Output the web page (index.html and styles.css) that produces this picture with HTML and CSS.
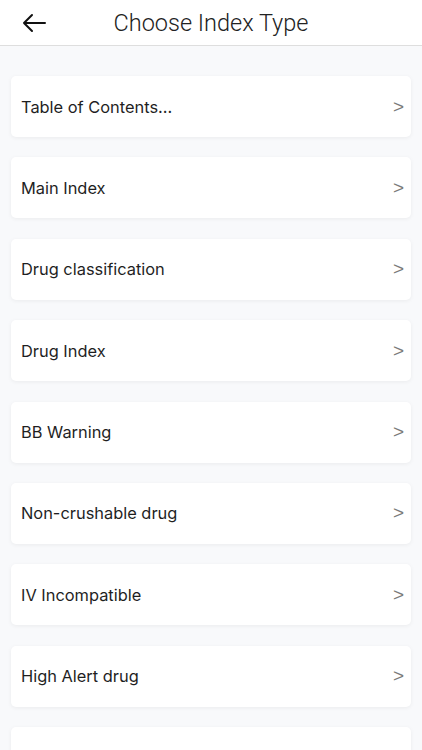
FILE: index.html
```html
<!DOCTYPE html>
<html>
<head>
<meta charset="utf-8">
<link rel="stylesheet" href="styles.css">
</head>
<body>
<header class="topbar">
  <button class="back" aria-label="Back">
    <svg width="26" height="20" viewBox="0 0 26 20"><path d="M24 10H3M11 2L3 10l8 8" fill="none" stroke="#111" stroke-width="2" stroke-linecap="round" stroke-linejoin="round"/></svg>
  </button>
  <h1 class="title">Choose Index Type</h1>
</header>
<main class="list">
  <div class="card"><span class="label">Table of Contents...</span><span class="chev">&gt;</span></div>
  <div class="card"><span class="label">Main Index</span><span class="chev">&gt;</span></div>
  <div class="card"><span class="label">Drug classification</span><span class="chev">&gt;</span></div>
  <div class="card"><span class="label">Drug Index</span><span class="chev">&gt;</span></div>
  <div class="card"><span class="label">BB Warning</span><span class="chev">&gt;</span></div>
  <div class="card"><span class="label">Non-crushable drug</span><span class="chev">&gt;</span></div>
  <div class="card"><span class="label">IV Incompatible</span><span class="chev">&gt;</span></div>
  <div class="card"><span class="label">High Alert drug</span><span class="chev">&gt;</span></div>
  <div class="card"><span class="label">&nbsp;</span><span class="chev"></span></div>
</main>
</body>
</html>
```
FILE: styles.css
```css
html, body {
  margin: 0;
  padding: 0;
  background: #f8f9fb;
  font-family: Inter, "Liberation Sans", Arial, sans-serif;
  height: 750px;
  overflow: hidden;
}
.topbar {
  height: 45px;
  background: #fff;
  border-bottom: 1px solid #dedede;
  display: flex;
  align-items: center;
  position: relative;
}
.back {
  border: 0;
  background: none;
  padding: 0;
  margin-left: 21px;
  width: 26px;
  height: 20px;
  display: flex;
}
.title {
  position: absolute;
  left: 0;
  right: 0;
  top: 0;
  margin: 0;
  text-align: center;
  font-family: Roboto, sans-serif;
  font-weight: 300;
  font-size: 23.5px;
  line-height: 47px;
  color: #222;
  pointer-events: none;
}
.list {
  padding: 30px 11px 0;
  display: flex;
  flex-direction: column;
  gap: 20.4px;
  height: 720px;
  overflow: hidden;
}
.card {
  height: 61px;
  background: #fff;
  border-radius: 5px;
  box-shadow: 0 1px 4px rgba(0,0,0,0.06);
  display: flex;
  align-items: center;
  justify-content: space-between;
  padding: 0 7px 0 10px;
  flex-shrink: 0;
}
.label {
  font-size: 16.4px;
  color: #1f1f1f;
}
.chev {
  font-family: "Liberation Sans", sans-serif;
  font-size: 19px;
  color: #7a7a7a;
}
```
